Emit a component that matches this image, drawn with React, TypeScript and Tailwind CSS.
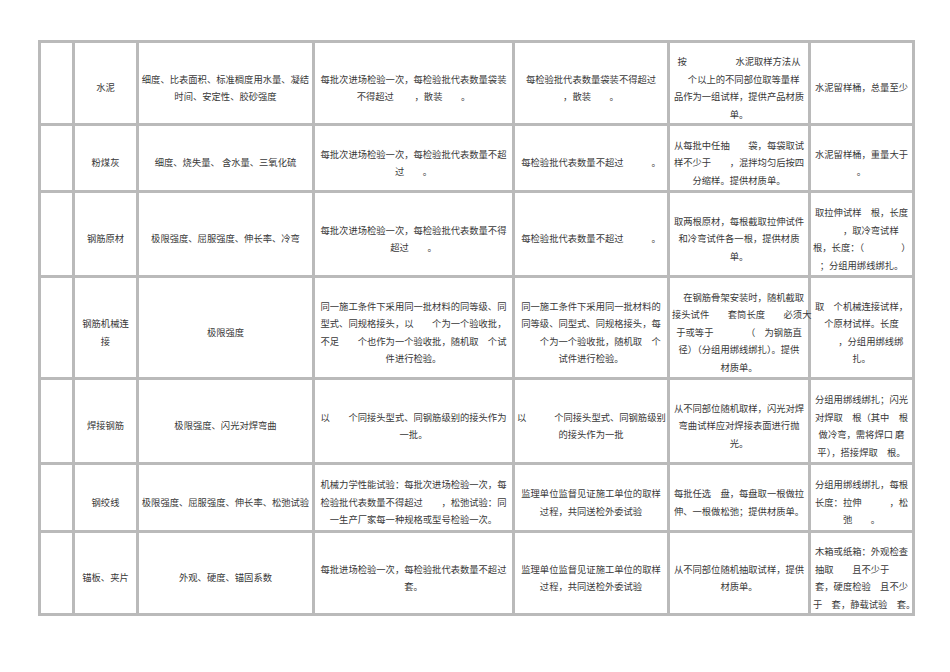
const S = '\u3000'

type Row = { h: string; cells: string[][] }

const ROWS: Row[] = [
  {
    h: 'h-[83px]',
    cells: [
      [],
      ['水泥'],
      ['细度、比表面积、标准稠度用水量、凝结', '时间、安定性、胶砂强度'],
      ['每批次进场检验一次，每检验批代表数量袋装', `不得超过${S}${S} ，散装${S}${S}。`],
      ['每检验批代表数量袋装不得超过', `，散装${S}${S}。`],
      [`按${S}${S}${S}${S}${S} 水泥取样方法从`, `${S}个以上的不同部位取等量样`, '品作为一组试样，提供产品材质', '单。'],
      ['水泥留样桶，总量至少'],
    ],
  },
  {
    h: 'h-[67px]',
    cells: [
      [],
      ['粉煤灰'],
      ['细度、烧失量、 含水量、三氧化硫'],
      ['每批次进场检验一次，每检验批代表数量不超', `过${S}${S}。`],
      [`每检验批代表数量不超过${S}${S}${S}。`],
      [`从每批中任抽${S}${S}袋，每袋取试`, `样不少于${S}${S}，混拌均匀后按四`, '分缩样。提供材质单。'],
      ['水泥留样桶，重量大于', '。'],
    ],
  },
  {
    h: 'h-[85px]',
    cells: [
      [],
      ['钢筋原材'],
      ['极限强度、屈服强度、伸长率、冷弯'],
      ['每批次进场检验一次，每检验批代表数量不得', `超过${S}${S}。`],
      [`每检验批代表数量不超过${S}${S}${S}。`],
      ['取两根原材，每根截取拉伸试件', '和冷弯试件各一根，提供材质', '单。'],
      [`取拉伸试样${S}根，长度`, `${S}${S}，取冷弯试样`, `根，长度：（${S}${S}${S}${S}）`, '；分组用绑线绑扎。'],
    ],
  },
  {
    h: 'h-[102px]',
    cells: [
      [],
      ['钢筋机械连', '接'],
      ['极限强度'],
      [
        '同一施工条件下采用同一批材料的同等级、同',
        `型式、同规格接头，以${S}${S}个为一个验收批，`,
        `不足${S}${S}个也作为一个验收批，随机取${S}个试`,
        '件进行检验。',
      ],
      ['同一施工条件下采用同一批材料的', '同等级、同型式、同规格接头，每', `${S}${S}个为一个验收批，随机取${S}个`, '试件进行检验。'],
      [
        `${S}在钢筋骨架安装时，随机截取`,
        `接头试件${S}${S}套筒长度${S}${S}必须大`,
        `于或等于${S}${S}${S}${S}（${S}为钢筋直`,
        '径）（分组用绑线绑扎）。提供',
        '材质单。',
      ],
      [`取${S}个机械连接试样，`, '个原材试样。长度', `${S}${S}，分组用绑线绑`, '扎。'],
    ],
  },
  {
    h: 'h-[85px]',
    cells: [
      [],
      ['焊接钢筋'],
      ['极限强度、闪光对焊弯曲'],
      [`以${S}${S}个同接头型式、同钢筋级别的接头作为`, '一批。'],
      [`以${S}${S}${S}个同接头型式、同钢筋级别`, '的接头作为一批'],
      ['从不同部位随机取样，闪光对焊', '弯曲试样应对焊接表面进行抛', '光。'],
      ['分组用绑线绑扎；闪光', `对焊取${S}根（其中${S}根`, '做冷弯，需将焊口 磨', `平），搭接焊取${S}根。`],
    ],
  },
  {
    h: 'h-[68px]',
    cells: [
      [],
      ['钢绞线'],
      ['极限强度、屈服强度、伸长率、松弛试验'],
      ['机械力学性能试验：每批次进场检验一次，每', `检验批代表数量不得超过${S}${S}，松弛试验：同`, '一生产厂家每一种规格或型号检验一次。'],
      ['监理单位监督见证施工单位的取样', '过程，共同送检外委试验'],
      [`每批任选${S}盘，每盘取一根做拉`, '伸、一根做松弛；提供材质单。'],
      ['分组用绑线绑扎，每根', `长度：拉伸${S}${S}${S}，松`, `弛${S}${S}。`],
    ],
  },
  {
    h: 'h-[82px]',
    cells: [
      [],
      ['锚板、夹片'],
      ['外观、硬度、锚固系数'],
      ['每批进场检验一次，每检验批代表数量不超过', '套。'],
      ['监理单位监督见证施工单位的取样', '过程，共同送检外委试验'],
      ['从不同部位随机抽取试样，提供', '材质单。'],
      ['木箱或纸箱：外观检查', `抽取${S}${S}且不少于${S}${S}`, `套，硬度检验${S}且不少`, `于${S}套，静载试验${S}套。`],
    ],
  },
]

const COLS = ['w-[34px]', 'w-[64px]', 'w-[176px]', 'w-[200px]', 'w-[155px]', 'w-[141px]', 'w-[104px]']

function Cell({ lines }: { lines: string[] }) {
  return (
    <td className="border-[3px] border-[#bababa] px-[2px] pt-[10px] pb-0 align-middle text-center">
      {lines.map((line, i) => (
        <div key={i} className="whitespace-pre">
          {line}
        </div>
      ))}
    </td>
  )
}

export default function App() {
  return (
    <div className="min-h-[672px] w-[950px] bg-white pt-[40px] pl-[38px]">
      <table
        className="table-fixed w-[873px] border-collapse border-[3px] border-[#cfcfcf] text-[9.3px] leading-[17.5px] text-[#383838]"
        style={{ fontFamily: '"Noto Sans CJK SC", "Noto Sans", sans-serif' }}
      >
        <colgroup>
          {COLS.map((c, i) => (
            <col key={i} className={c} />
          ))}
        </colgroup>
        <tbody>
          {ROWS.map((row, i) => (
            <tr key={i} className={row.h}>
              {row.cells.map((lines, j) => (
                <Cell key={j} lines={lines} />
              ))}
            </tr>
          ))}
        </tbody>
      </table>
    </div>
  )
}
